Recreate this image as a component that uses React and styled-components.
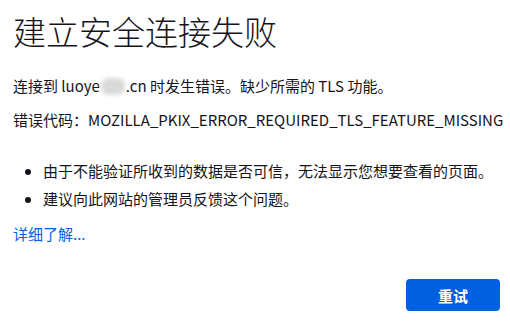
import React from 'react';
import styled, { createGlobalStyle } from 'styled-components';

const Global = createGlobalStyle`
  html, body {
    margin: 0;
    padding: 0;
    background: #ffffff;
  }
  body {
    font-family: "Noto Sans CJK SC", "Liberation Sans", sans-serif;
    color: #15141a;
  }
`;

function App() {
  return (
    <>
      <Global />
      <Page>
        <Title>建立安全连接失败</Title>
        <Text>
          连接到 luoye<Blur />.cn 时发生错误。缺少所需的 TLS 功能。
        </Text>
        <Text>错误代码：MOZILLA_PKIX_ERROR_REQUIRED_TLS_FEATURE_MISSING</Text>
        <List>
          <Item>由于不能验证所收到的数据是否可信，无法显示您想要查看的页面。</Item>
          <Item>建议向此网站的管理员反馈这个问题。</Item>
        </List>
        <Link href="#">详细了解...</Link>
        <Actions>
          <RetryBtn>重试</RetryBtn>
        </Actions>
      </Page>
    </>
  );
}

export default App;

const Page = styled.div`
  padding: 9px 10px 0 13px;
  display: flex;
  flex-direction: column;
`;

const Title = styled.h1`
  margin: 0 0 22px;
  font-size: 33px;
  font-weight: 300;
  line-height: 44px;
  color: #15141a;
`;

const Text = styled.p`
  margin: 0 0 12px;
  font-size: 15px;
  line-height: 22px;
  white-space: nowrap;
`;

const Blur = styled.span`
  display: inline-block;
  width: 24px;
  height: 17px;
  vertical-align: -3px;
  margin: 0 1px;
  border-radius: 8px;
  background: #d9d9d9;
  filter: blur(2px);
`;

const List = styled.ul`
  margin: 17px 0 13px;
  padding-left: 30px;
  font-size: 15px;
  line-height: 22px;

  li + li {
    margin-top: 6px;
  }
`;

const Item = styled.li``;

const Link = styled.a`
  font-size: 15px;
  line-height: 22px;
  color: #0061e0;
  text-decoration: none;
  align-self: flex-start;
`;

const Actions = styled.div`
  display: flex;
  justify-content: flex-end;
  margin-top: 34px;
`;

const RetryBtn = styled.button`
  width: 94px;
  height: 32px;
  border: none;
  border-radius: 4px;
  background: #0061e0;
  color: #ffffff;
  font-family: "Noto Sans CJK SC", "Liberation Sans", sans-serif;
  font-size: 15px;
  font-weight: 700;
  cursor: pointer;
`;
